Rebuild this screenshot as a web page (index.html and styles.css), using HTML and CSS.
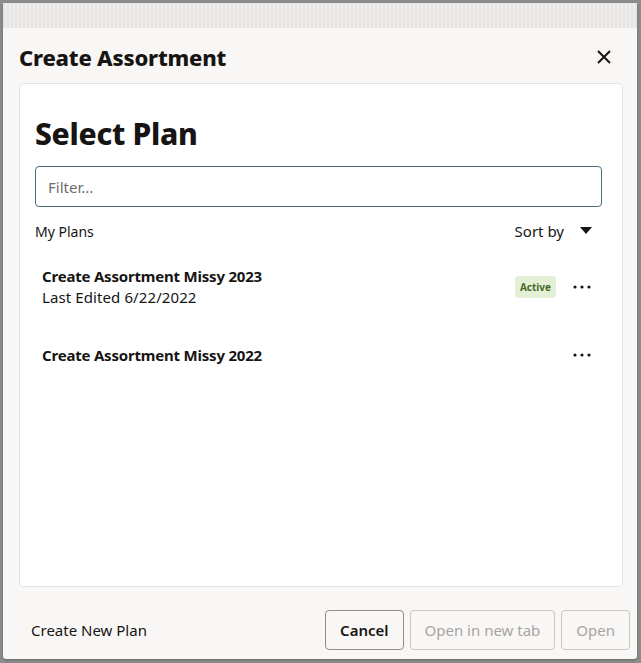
FILE: index.html
```html
<!DOCTYPE html>
<html lang="en">
<head>
  <meta charset="UTF-8" />
  <meta name="viewport" content="width=device-width, initial-scale=1.0" />
  <title>Create Assortment</title>
  <link rel="stylesheet" href="styles.css">
</head>
<body>
  <div class="dialog">
    <div class="dialog-strip"></div>

    <div class="dialog-header">
      <h1>Create Assortment</h1>
      <button class="close-btn" aria-label="Close">
        <svg width="14" height="14" viewBox="0 0 14 14">
          <path d="M1 1 L13 13 M13 1 L1 13" stroke="#161513" stroke-width="2" fill="none" />
        </svg>
      </button>
    </div>

    <div class="dialog-body">
      <h2>Select Plan</h2>
      <input class="filter" type="text" placeholder="Filter...">

      <div class="list-head">
        <span>My Plans</span>
        <span class="sort">Sort by
          <svg width="12" height="8" viewBox="0 0 12 8"><path d="M0 0 H12 L6 7 Z" fill="#161513" /></svg>
        </span>
      </div>

      <div class="plan">
        <div class="plan-info">
          <div class="plan-name">Create Assortment Missy 2023</div>
          <div class="plan-meta">Last Edited 6/22/2022</div>
        </div>
        <span class="badge">Active</span>
        <svg class="more" width="18" height="4" viewBox="0 0 18 4">
          <circle cx="2" cy="2" r="1.6" fill="#161513" />
          <circle cx="9" cy="2" r="1.6" fill="#161513" />
          <circle cx="16" cy="2" r="1.6" fill="#161513" />
        </svg>
      </div>

      <div class="plan">
        <div class="plan-info">
          <div class="plan-name">Create Assortment Missy 2022</div>
        </div>
        <svg class="more" width="18" height="4" viewBox="0 0 18 4">
          <circle cx="2" cy="2" r="1.6" fill="#161513" />
          <circle cx="9" cy="2" r="1.6" fill="#161513" />
          <circle cx="16" cy="2" r="1.6" fill="#161513" />
        </svg>
      </div>
    </div>

    <div class="dialog-footer">
      <a class="link">Create New Plan</a>
      <div class="actions">
        <button class="btn">Cancel</button>
        <button class="btn" disabled>Open in new tab</button>
        <button class="btn" disabled>Open</button>
      </div>
    </div>
  </div>
</body>
</html>
```

FILE: styles.css
```css
* {
  margin: 0;
  padding: 0;
  box-sizing: border-box;
  font-family: 'Noto Sans', 'Lato', sans-serif;
}

body {
  background: #8d8d8d;
  padding: 3px 4px 0 3px;
  height: 663px;
  overflow: hidden;
}

.dialog {
  background: #f8f7f5;
  height: 656px;
  border-radius: 3px;
  display: flex;
  flex-direction: column;
  color: #161513;
  box-shadow: 0 1px 3px rgba(0, 0, 0, 0.3);
}

.dialog-strip {
  height: 25px;
  background: repeating-linear-gradient(90deg, #e6e5e3 0 2px, #eeedeb 2px 4px);
}

.dialog-header {
  display: flex;
  align-items: center;
  justify-content: space-between;
  padding: 3px 26px 0 16px;
  height: 55px;
}

.dialog-header h1 {
  font-size: 22px;
  font-weight: 800;
  letter-spacing: -0.2px;
}

.close-btn {
  background: none;
  border: none;
  display: flex;
  cursor: pointer;
}

.dialog-body {
  margin: 0 14px 0 16px;
  height: 504px;
  background: #fff;
  border: 1px solid #e4e3e1;
  border-radius: 5px;
  padding: 30px 20px 0 15px;
}

.dialog-body h2 {
  font-size: 30px;
  font-weight: 800;
  line-height: 40px;
  letter-spacing: -0.3px;
}

.filter {
  display: block;
  width: 100%;
  height: 41px;
  margin-top: 12px;
  border: 1px solid #4b6c7a;
  border-radius: 4px;
  padding: 0 12px;
  font-size: 15px;
  color: #161513;
  outline: none;
}

.filter::placeholder {
  color: #6f6c69;
}

.list-head {
  display: flex;
  justify-content: space-between;
  align-items: center;
  margin-top: 14px;
  margin-bottom: 11px;
  font-size: 14px;
}

.sort {
  display: flex;
  align-items: center;
  gap: 16px;
  font-size: 15px;
  padding-right: 10px;
}

.plan {
  display: flex;
  align-items: center;
  gap: 17px;
  padding: 14px 11px 14px 7px;
  min-height: 66px;
}

.plan-info {
  flex: 1;
}

.plan-name {
  font-size: 15px;
  font-weight: 700;
  line-height: 20px;
  letter-spacing: -0.2px;
}

.plan-meta {
  font-size: 15px;
  line-height: 22px;
  letter-spacing: 0.1px;
}

.badge {
  background: #e3f0d6;
  color: #476a2a;
  font-size: 10px;
  font-weight: 700;
  padding: 3px 5px;
  border-radius: 4px;
  line-height: 16px;
}

.dialog-footer {
  flex: 1;
  display: flex;
  align-items: center;
  justify-content: space-between;
  padding: 14px 7px 0 28px;
}

.link {
  font-size: 15px;
}

.actions {
  display: flex;
  gap: 6px;
}

.btn {
  height: 40px;
  padding: 0 14px;
  background: #f8f7f5;
  border: 1px solid #8f8c89;
  border-radius: 4px;
  font-size: 15px;
  font-weight: 600;
  color: #161513;
}

.btn:disabled {
  color: #a8a5a2;
  border-color: #c9c7c4;
  font-weight: 400;
}
```
